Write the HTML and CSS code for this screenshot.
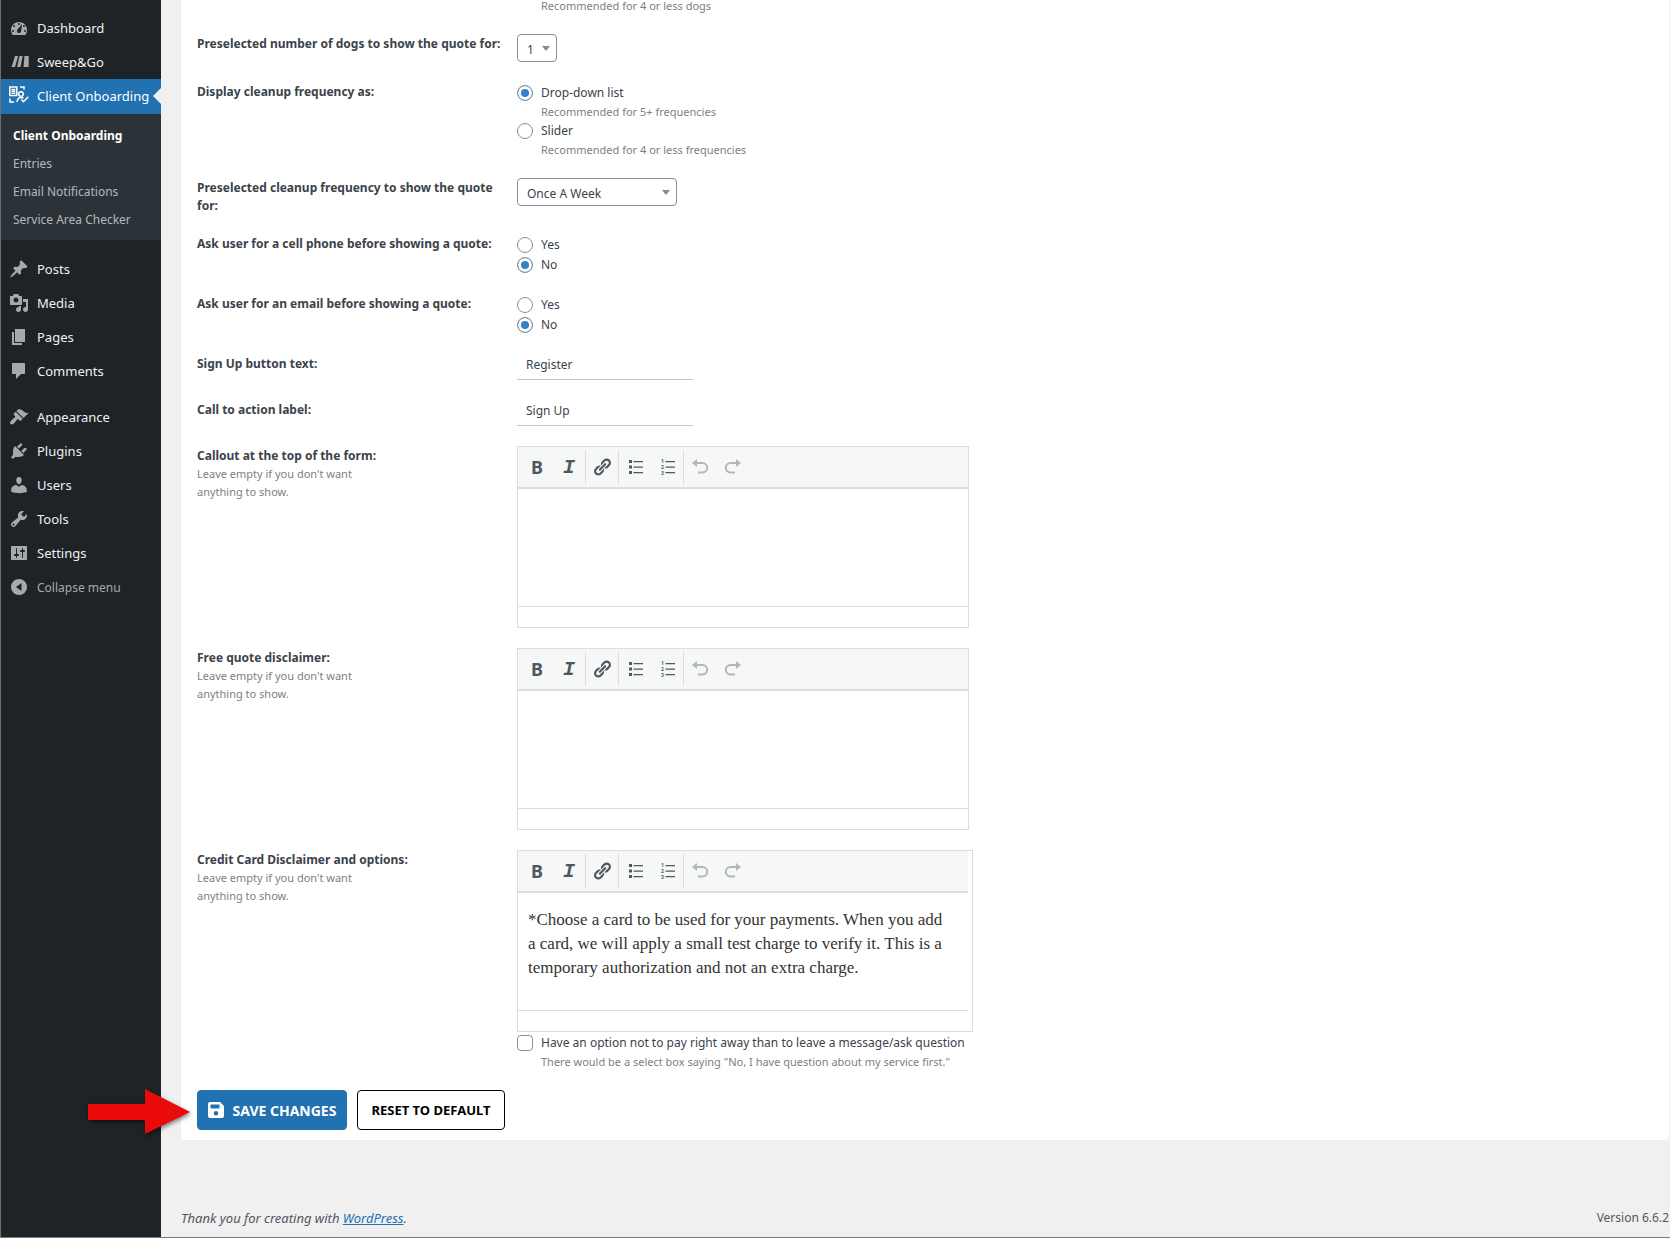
FILE: index.html
```html
<!DOCTYPE html>
<html lang="en">
<head>
	<meta charset="UTF-8">
	<meta name="viewport" content="width=device-width, initial-scale=1">
	<title>Client Onboarding</title>
	<link rel="stylesheet" href="styles.css">
</head>
<body>
	<svg class="sprite" aria-hidden="true">
		<symbol id="i-link" viewBox="0 0 20 20"><path d="M17.74 2.76c1.68 1.69 1.68 4.41 0 6.1l-1.53 1.52c-1.12 1.12-2.7 1.47-4.14 1.09l2.62-2.61.76-.77.76-.76c.84-.84.84-2.2 0-3.04-.84-.85-2.2-.85-3.04 0l-.77.76-3.38 3.38c-.37-1.44-.02-3.02 1.1-4.14l1.52-1.53c1.69-1.68 4.42-1.68 6.1 0zM8.59 13.43l5.34-5.34c.42-.42.42-1.1 0-1.52-.44-.43-1.13-.39-1.53 0l-5.33 5.34c-.42.42-.42 1.1 0 1.52.44.43 1.13.39 1.52 0zm-.76 2.29l4.14-4.15c.38 1.44.03 3.02-1.09 4.14l-1.52 1.53c-1.69 1.68-4.41 1.68-6.1 0-1.68-1.68-1.68-4.42 0-6.1l1.53-1.52c1.12-1.12 2.7-1.47 4.14-1.1l-4.14 4.15c-.85.84-.85 2.2 0 3.05.84.84 2.2.84 3.04 0z"/></symbol>
		<symbol id="i-ul" viewBox="0 0 20 20"><path d="M4 3h3v3H4zM4 8.500h3v3H4zM4 14h3v3H4zM8.500 4H18v1.200H8.500zM8.500 9.500H18v1.200H8.500zM8.500 15H18v1.200H8.500z"/></symbol>
		<symbol id="i-undo" viewBox="0 0 20 20"><path d="M2 6l5-4v3h5.500a5.700 5.700 0 0 1 0 11.400H8v-2h4.500a3.700 3.700 0 0 0 0-7.400H7v3z"/></symbol>
		<symbol id="i-redo" viewBox="0 0 20 20"><path d="M19 6l-5-4v3H8.500a5.700 5.700 0 0 0 0 11.400H13v-2H8.500a3.700 3.700 0 0 1 0-7.400H14v3z"/></symbol>
	</svg>

	<nav class="sidebar">
		<ul class="menu">
			<li><a href="#"><svg viewBox="0 0 20 20"><path fill-rule="evenodd" d="M3.760 17h12.480c1.100-1.370 1.760-3.110 1.760-5 0-4.420-3.580-8-8-8s-8 3.580-8 8c0 1.890.66 3.630 1.760 5zM9 6a1 1 0 1 1 2 0 1 1 0 0 1-2 0zM4 8a1 1 0 1 1 2 0 1 1 0 0 1-2 0zm4.520 3.400c.84-.83 4.510-5.500 4.510-5.500s-.66 7.680-1.490 8.510c-.84.84-2.180.84-3.020 0-.83-.83-.83-2.180 0-3.010zM3 13a1 1 0 1 1 2 0 1 1 0 0 1-2 0zm12 0a1 1 0 1 1 2 0 1 1 0 0 1-2 0zM14 8a1 1 0 1 1 2 0 1 1 0 0 1-2 0z"/></svg>Dashboard</a></li>
			<li><a href="#"><svg viewBox="0 0 20 20"><path d="M6 4h3.200L6 15H2.600zM10.500 4h3.200L11.500 15H8.200zM15.500 4h4.200v11h-5.200z"/></svg>Sweep&amp;Go</a></li>
			<li class="current">
				<a href="#"><svg viewBox="0 0 20 20"><g fill="none" stroke="#fff" stroke-width="1.500"><path d="M.8 1h7v8.500h-7zM2.500 3.500h3.800M2.500 5.300h3.800M2.500 7.200h3.800M11 1h4v2.500M1 12.500V16h4"/><circle cx="12" cy="8" r="2.300"/><path d="M8 16c.3-3 1.700-4.600 4-4.600 1 0 1.800.3 2.500.8M12.300 13.500l2.200 2.200 4.800-5"/></g></svg>Client Onboarding</a>
				<ul class="submenu">
					<li><a class="active" href="#">Client Onboarding</a></li>
					<li><a href="#">Entries</a></li>
					<li><a href="#">Email Notifications</a></li>
					<li><a href="#">Service Area Checker</a></li>
				</ul>
			</li>
			<li class="separated"><a href="#"><svg viewBox="0 0 20 20"><path d="M10.440 3.020l1.820-1.820 6.360 6.350-1.830 1.820c-1.050-.68-2.480-.57-3.410.36l-.75.75c-.92.93-1.040 2.350-.35 3.410l-1.830 1.820-2.410-2.410-2.800 2.790c-.42.42-3.380 2.710-3.800 2.290s1.860-3.390 2.280-3.810l2.790-2.790L4.100 9.360l1.830-1.820c1.050.69 2.480.57 3.400-.36l.75-.75c.93-.92 1.050-2.350.36-3.410z"/></svg>Posts</a></li>
			<li><a href="#"><svg viewBox="0 0 20 20"><path fill-rule="evenodd" d="M13 11V4c0-.55-.45-1-1-1h-1.670L9 1H5L3.670 3H2c-.55 0-1 .45-1 1v7c0 .55.45 1 1 1h10c.55 0 1-.45 1-1zM7 4.500c1.380 0 2.500 1.120 2.500 2.500S8.380 9.500 7 9.500 4.500 8.380 4.500 7 5.620 4.500 7 4.500zM14 6h5v10.500c0 1.380-1.120 2.500-2.500 2.500S14 17.880 14 16.500s1.120-2.500 2.500-2.500c.17 0 .34.02.5.05V9h-3V6zm-4 8.050V13h2v3.500c0 1.380-1.120 2.500-2.500 2.500S7 17.880 7 16.500 8.120 14 9.500 14c.17 0 .34.02.5.05z"/></svg>Media</a></li>
			<li><a href="#"><svg viewBox="0 0 20 20"><path d="M6 15V2h10v13H6zm-1 1h8v2H3V5h2v11z"/></svg>Pages</a></li>
			<li><a href="#"><svg viewBox="0 0 20 20"><path d="M4 2h11c.6 0 1 .4 1 1v9c0 .6-.4 1-1 1h-3l-5 5v-5H4c-.6 0-1-.4-1-1V3c0-.6.4-1 1-1z"/></svg>Comments</a></li>
			<li class="separated"><a href="#"><svg viewBox="0 0 20 20"><path d="M14.480 11.060L7.410 3.990l1.500-1.500c.5-.56 2.300-.47 3.510.32 1.210.8 1.430 1.280 2.910 2.100 1.180.64 2.450 1.260 4.450.85zm-.71.71L6.700 4.700 4.930 6.470c-.39.39-.39 1.020 0 1.410l1.060 1.060c.39.39.39 1.030 0 1.420-.6.6-1.430 1.110-2.210 1.690-.35.26-.7.53-1.010.84C1.430 14.230.4 16.080 1.400 17.070c.99 1 2.840-.03 4.180-1.360.31-.31.58-.66.85-1.020.57-.78 1.080-1.610 1.690-2.210.39-.39 1.020-.39 1.410 0l1.060 1.060c.39.39 1.020.39 1.410 0z"/></svg>Appearance</a></li>
			<li><a href="#"><svg viewBox="0 0 20 20"><path d="M13.110 4.360L9.870 7.600 8 5.730l3.240-3.240c.35-.34 1.050-.2 1.560.32.52.51.66 1.210.31 1.550zm-8 1.770l.91-1.120 9.010 9.010-1.190.84c-.71.71-2.630 1.160-3.820 1.160H6.140L4.900 17.260c-.59.59-1.540.59-2.120 0-.59-.58-.59-1.530 0-2.120l1.240-1.240v-3.880c0-1.130.4-3.190 1.090-3.890zm7.260 3.970l3.240-3.240c.34-.35 1.040-.21 1.550.31.52.51.66 1.210.31 1.550l-3.240 3.250z"/></svg>Plugins</a></li>
			<li><a href="#"><svg viewBox="0 0 20 20"><path d="M10 9.250c-2.270 0-2.730-3.440-2.730-3.440C7 4.020 7.820 2 9.970 2c2.160 0 2.980 2.020 2.710 3.810 0 0-.41 3.440-2.680 3.440zm0 2.570L12.720 10c2.390 0 5.020 2.330 5.020 4.530v2.490s-3.650 1.130-7.740 1.130c-4.150 0-7.740-1.130-7.740-1.130v-2.490c0-2.250 2.440-4.480 4.970-4.480z"/></svg>Users</a></li>
			<li><a href="#"><svg viewBox="0 0 20 20"><path fill-rule="evenodd" d="M16.680 9.770c-1.340 1.340-3.300 1.670-4.950.99l-5.410 6.520c-.99.99-2.590.99-3.580 0s-.99-2.590 0-3.570l6.520-5.420c-.68-1.650-.35-3.610.99-4.950 1.280-1.280 3.120-1.620 4.720-1.060l-2.890 2.890 2.820 2.820 2.860-2.870c.53 1.580.18 3.390-1.080 4.650zM3.810 16.210c.4.39 1.040.39 1.430 0 .4-.4.4-1.040 0-1.430-.39-.4-1.030-.4-1.430 0-.39.39-.39 1.030 0 1.430z"/></svg>Tools</a></li>
			<li><a href="#"><svg viewBox="0 0 20 20"><path fill-rule="evenodd" d="M18 16V4c0-.55-.45-1-1-1H3c-.55 0-1 .45-1 1v12c0 .55.45 1 1 1h14c.55 0 1-.45 1-1zM8 11h1c.55 0 1 .45 1 1s-.45 1-1 1H8v1.500c0 .28-.22.5-.5.5s-.5-.22-.5-.5V13H6c-.55 0-1-.45-1-1s.45-1 1-1h1V5.500c0-.28.22-.5.5-.5s.5.22.5.5V11zm5-2h-1c-.55 0-1-.45-1-1s.45-1 1-1h1V5.500c0-.28.22-.5.5-.5s.5.22.5.5V7h1c.55 0 1 .45 1 1s-.45 1-1 1h-1v5.500c0 .28-.22.5-.5.5s-.5-.22-.5-.5V9z"/></svg>Settings</a></li>
			<li><button type="button" class="collapse"><svg viewBox="0 0 20 20"><path fill-rule="evenodd" d="M10 2a8 8 0 1 0 0 16 8 8 0 0 0 0-16zm2.500 4v8L7 10z"/></svg>Collapse menu</button></li>
		</ul>
	</nav>

	<div class="content">
		<form class="panel">
			<div class="row first">
				<div class="label"></div>
				<div class="field options"><p class="hint indent">Recommended for 4 or less dogs</p></div>
			</div>
			<div class="row">
				<div class="label"><label for="dogs">Preselected number of dogs to show the quote for:</label></div>
				<div class="field">
					<div class="select"><select id="dogs"><option>1</option><option>2</option><option>3</option><option>4</option></select></div>
				</div>
			</div>
			<div class="row">
				<div class="label">Display cleanup frequency as:</div>
				<div class="field options">
					<label class="option"><input type="radio" name="display" checked>Drop-down list</label>
					<p class="hint indent">Recommended for 5+ frequencies</p>
					<label class="option"><input type="radio" name="display">Slider</label>
					<p class="hint indent">Recommended for 4 or less frequencies</p>
				</div>
			</div>
			<div class="row">
				<div class="label"><label for="frequency">Preselected cleanup frequency to show the quote for:</label></div>
				<div class="field">
					<div class="select wide"><select id="frequency"><option>Once A Week</option></select></div>
				</div>
			</div>
			<div class="row">
				<div class="label">Ask user for a cell phone before showing a quote:</div>
				<div class="field options">
					<label class="option"><input type="radio" name="phone">Yes</label>
					<label class="option"><input type="radio" name="phone" checked>No</label>
				</div>
			</div>
			<div class="row">
				<div class="label">Ask user for an email before showing a quote:</div>
				<div class="field options">
					<label class="option"><input type="radio" name="email">Yes</label>
					<label class="option"><input type="radio" name="email" checked>No</label>
				</div>
			</div>
			<div class="row">
				<div class="label"><label for="signup">Sign Up button text:</label></div>
				<div class="field"><input class="text" type="text" id="signup" value="Register"></div>
			</div>
			<div class="row">
				<div class="label"><label for="cta">Call to action label:</label></div>
				<div class="field"><input class="text" type="text" id="cta" value="Sign Up"></div>
			</div>
			<div class="row">
				<div class="label">
					<label for="callout">Callout at the top of the form:</label>
					<p class="hint">Leave empty if you don't want anything to show.</p>
				</div>
				<div class="field">
					<div class="editor">
						<div class="toolbar">
							<div class="group"><button type="button" class="bold">B</button><button type="button" class="italic">I</button></div>
							<div class="group"><button type="button" aria-label="Link"><svg><use href="#i-link"/></svg></button></div>
							<div class="group"><button type="button" aria-label="Bulleted list"><svg><use href="#i-ul"/></svg></button><button type="button" aria-label="Numbered list"><svg viewBox="0 0 20 20"><path d="M8.500 4H18v1.200H8.500zM8.500 9.500H18v1.200H8.500zM8.500 15H18v1.200H8.500z"/><text x="4" y="6">1</text><text x="4" y="12">2</text><text x="4" y="18">3</text></svg></button></div>
							<div class="group"><button type="button" aria-label="Undo" disabled><svg><use href="#i-undo"/></svg></button><button type="button" aria-label="Redo" disabled><svg><use href="#i-redo"/></svg></button></div>
						</div>
						<textarea id="callout"></textarea>
						<div class="status"></div>
					</div>
				</div>
			</div>
			<div class="row">
				<div class="label">
					<label for="quote">Free quote disclaimer:</label>
					<p class="hint">Leave empty if you don't want anything to show.</p>
				</div>
				<div class="field">
					<div class="editor">
						<div class="toolbar">
							<div class="group"><button type="button" class="bold">B</button><button type="button" class="italic">I</button></div>
							<div class="group"><button type="button" aria-label="Link"><svg><use href="#i-link"/></svg></button></div>
							<div class="group"><button type="button" aria-label="Bulleted list"><svg><use href="#i-ul"/></svg></button><button type="button" aria-label="Numbered list"><svg viewBox="0 0 20 20"><path d="M8.500 4H18v1.200H8.500zM8.500 9.500H18v1.200H8.500zM8.500 15H18v1.200H8.500z"/><text x="4" y="6">1</text><text x="4" y="12">2</text><text x="4" y="18">3</text></svg></button></div>
							<div class="group"><button type="button" aria-label="Undo" disabled><svg><use href="#i-undo"/></svg></button><button type="button" aria-label="Redo" disabled><svg><use href="#i-redo"/></svg></button></div>
						</div>
						<textarea id="quote"></textarea>
						<div class="status"></div>
					</div>
				</div>
			</div>
			<div class="row">
				<div class="label">
					<label for="card">Credit Card Disclaimer and options:</label>
					<p class="hint">Leave empty if you don't want anything to show.</p>
				</div>
				<div class="field">
					<div class="editor roomy">
						<div class="toolbar">
							<div class="group"><button type="button" class="bold">B</button><button type="button" class="italic">I</button></div>
							<div class="group"><button type="button" aria-label="Link"><svg><use href="#i-link"/></svg></button></div>
							<div class="group"><button type="button" aria-label="Bulleted list"><svg><use href="#i-ul"/></svg></button><button type="button" aria-label="Numbered list"><svg viewBox="0 0 20 20"><path d="M8.500 4H18v1.200H8.500zM8.500 9.500H18v1.200H8.500zM8.500 15H18v1.200H8.500z"/><text x="4" y="6">1</text><text x="4" y="12">2</text><text x="4" y="18">3</text></svg></button></div>
							<div class="group"><button type="button" aria-label="Undo" disabled><svg><use href="#i-undo"/></svg></button><button type="button" aria-label="Redo" disabled><svg><use href="#i-redo"/></svg></button></div>
						</div>
						<textarea id="card">*Choose a card to be used for your payments. When you add a card, we will apply a small test charge to verify it. This is a temporary authorization and not an extra charge.</textarea>
						<div class="status"></div>
					</div>
					<div class="options">
						<label class="option"><input type="checkbox">Have an option not to pay right away than to leave a message/ask question</label>
						<p class="hint indent">There would be a select box saying "No, I have question about my service first."</p>
					</div>
				</div>
			</div>
			<div class="actions">
				<svg class="arrow" viewBox="0 0 102 46" aria-hidden="true"><path d="M0 15h57V0l45 23-45 22V31H0z"/></svg>
				<button type="submit" class="save"><svg viewBox="0 0 16 16"><path fill-rule="evenodd" d="M2 0h10l4 4v10a2 2 0 0 1-2 2H2a2 2 0 0 1-2-2V2a2 2 0 0 1 2-2zm.5 2.500v4h9v-4zM8 9a2.300 2.300 0 1 0 0 4.600A2.300 2.300 0 0 0 8 9z"/></svg>SAVE CHANGES</button>
				<button type="reset" class="reset">RESET TO DEFAULT</button>
			</div>
		</form>
		<footer class="footer">
			<p class="thanks">Thank you for creating with <a href="#">WordPress</a>.</p>
			<p>Version 6.6.2</p>
		</footer>
	</div>
</body>
</html>
```
FILE: styles.css
```css
*{box-sizing: border-box;}
body,ul,li,p{margin:0;padding:0;}
ul{list-style-type: none;}
body{
	display: flex;
	min-height: 100vh;
	background: #f0f0f1;
	border-bottom: 1px solid #76797b;
	color: #3c434a;
	font: 13px/18px "Noto Sans", "Open Sans", sans-serif;
}
button,input,select,textarea{font-family: inherit;}
.sprite{
	position: absolute;
	width: 0;
	height: 0;
}

/* admin menu */
.sidebar{
	flex: none;
	width: 161px;
	padding-top: 11px;
	background: #1d2327;
	border-left: 1px solid #6b6f72;
}
.menu a,.collapse{
	display: flex;
	align-items: center;
	gap: 8px;
	height: 34px;
	padding-left: 8px;
	color: #f0f0f1;
	font-size: 13px;
	text-decoration: none;
	white-space: nowrap;
}
.menu svg{
	flex: none;
	width: 20px;
	height: 20px;
	fill: #a7aaad;
}
.menu .separated{margin-top: 12px;}
.menu .current{position: relative;}
.menu .current > a{
	height: 35px;
	padding-bottom: 2px;
	background: #2271b1;
	color: #fff;
}
.menu .current:after{
	content: "";
	position: absolute;
	top: 9px;
	right: 0;
	border: 8px solid transparent;
	border-left-width: 0;
	border-right-color: #f0f0f1;
}
.submenu{
	padding: 8px 0 6px;
	background: #2c3338;
}
.menu .submenu a{
	height: 28px;
	padding-left: 12px;
	color: #b4b8bb;
	font-size: 12px;
}
.menu .submenu a.active{
	color: #fff;
	font-weight: bold;
}
.collapse{
	width: 100%;
	padding-top: 0;
	padding-bottom: 0;
	border: 0;
	background: none;
	color: #a7aaad;
	font-size: 12px;
}

/* settings form */
.content{
	flex: 1;
	display: flex;
	flex-direction: column;
	min-width: 0;
	padding: 0 1px 0 20px;
}
.panel{
	display: flex;
	flex-direction: column;
	gap: 20px;
	padding: 0 16px 10px;
	background: #fff;
	border-radius: 0 0 4px 4px;
}
.row{display: flex;}
.row.first{margin-top: -4px;}
.label{
	flex: none;
	width: 320px;
	padding-right: 8px;
	font-size: 12px;
	font-weight: bold;
}
.label,.options{margin: 1px 0 -1px;}
.label label{display: block;}
.hint{
	color: #7d7f82;
	font-size: 11px;
	font-weight: normal;
}
.label .hint{width: 180px;}
.indent{padding-left: 24px;}
.option{
	display: flex;
	align-items: center;
	gap: 8px;
	height: 20px;
	font-size: 12px;
}
.option input{
	appearance: none;
	width: 16px;
	height: 16px;
	margin: 0;
	border: 1px solid #8c8f94;
	border-radius: 4px;
	background: #fff;
}
.option input[type=radio]{border-radius: 50%;}
.option input[type=radio]:checked{
	background: #3582c4;
	border-color: #8c8f94;
	box-shadow: inset 0 0 0 3px #fff;
}
.select{
	position: relative;
	width: 40px;
}
.select.wide{width: 160px;}
.select select{
	appearance: none;
	display: block;
	width: 100%;
	height: 28px;
	padding: 2px 8px 0 9px;
	border: 1px solid #8c8f94;
	border-radius: 4px;
	background: #fff;
	color: #3c434a;
	font-size: 12px;
}
.select:after{
	content: "";
	position: absolute;
	top: 12px;
	right: 7px;
	border: 4px solid transparent;
	border-top: 5px solid #888;
	border-bottom: 0;
	pointer-events: none;
}
.text{
	display: block;
	width: 176px;
	height: 26px;
	padding: 0 9px 4px;
	border: 0;
	border-bottom: 1px solid #c3c4c7;
	background: none;
	color: #3c434a;
	font-size: 12px;
}

/* rich text editor */
.editor{
	width: 452px;
	border: 1px solid #dcdcde;
	background: #fff;
}
.editor.roomy{
	width: 456px;
	padding-right: 4px;
}
.toolbar{
	display: flex;
	height: 42px;
	padding: 3px;
	background: #f6f7f7;
	border-bottom: 2px solid #dcdcde;
}
.group{display: flex;}
.group + .group{border-left: 1px solid #dcdcde;}
.toolbar button{
	display: flex;
	align-items: center;
	justify-content: center;
	width: 32px;
	padding: 0;
	border: 0;
	background: none;
	color: #50575e;
	fill: #50575e;
}
.toolbar button:disabled{fill: #b4b7ba;}
.toolbar svg{
	width: 20px;
	height: 20px;
}
.toolbar text{
	font-family: "Open Sans", sans-serif;
	font-size: 5px;
	font-weight: bold;
}
.toolbar .bold{
	font-size: 18px;
	font-weight: bold;
}
.toolbar .italic{
	font: italic bold 20px "Liberation Mono", monospace;
}
.editor textarea{
	display: block;
	width: 100%;
	height: 117px;
	padding: 15px 20px 0 10px;
	border: 0;
	outline: 0;
	resize: none;
	overflow: hidden;
	background: none;
	color: #333;
	font: 17px/24px "Liberation Serif", serif;
}
.status{
	height: 21px;
	border-top: 1px solid #dcdcde;
}

/* buttons */
.actions{
	position: relative;
	display: flex;
	gap: 10px;
}
.actions button{
	display: flex;
	align-items: center;
	justify-content: center;
	gap: 9px;
	height: 40px;
	padding: 0;
	border: 1px solid #000;
	border-radius: 4px;
	background: #fff;
	color: #000;
	font-size: 13px;
	font-weight: bold;
}
.actions .save{
	width: 150px;
	border-color: #2271b1;
	background: #2271b1;
	color: #fff;
	font-size: 14px;
	white-space: nowrap;
}
.actions .reset{width: 148px;}
.save svg{
	flex: none;
	width: 16px;
	height: 16px;
	fill: #fff;
}
.arrow{
	position: absolute;
	top: -1px;
	left: -109px;
	width: 102px;
	height: 46px;
	fill: #ea0a0a;
	filter: drop-shadow(1px 2px 2px rgba(0,0,0,.5));
}

.footer{
	display: flex;
	justify-content: space-between;
	margin-top: auto;
	padding-bottom: 10px;
	color: #50575e;
	font-size: 12px;
}
.thanks{
	font-size: 13px;
	font-style: italic;
}
.footer a{color: #2271b1;}
```
